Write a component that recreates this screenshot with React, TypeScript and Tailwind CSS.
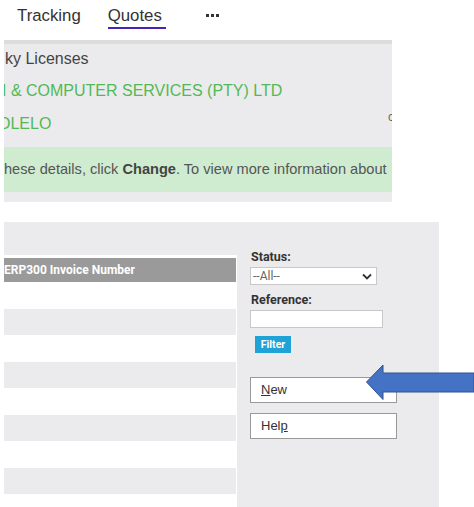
import React from "react";

const rows = [0, 1, 2, 3, 4, 5, 6, 7, 8];

export default function App() {
  return (
    <div className="relative w-[474px] h-[507px] overflow-hidden bg-white font-['Liberation_Sans',Arial,sans-serif]">
      {/* Nav */}
      <div className="h-[40px] flex items-start pt-[6px] text-[16.8px] leading-[20px] text-[#333]">
        <div className="ml-[17px]">Tracking</div>
        <div className="ml-[27px] flex flex-col">
          <span>Quotes</span>
          <span className="mt-[1px] h-[2px] w-[58px] bg-[#4b22b8]" />
        </div>
        <div className="ml-[40px] mt-[8px] flex gap-[2px]">
          <span className="w-[3px] h-[3px] bg-[#333]" />
          <span className="w-[3px] h-[3px] bg-[#333]" />
          <span className="w-[3px] h-[3px] bg-[#333]" />
        </div>
      </div>

      {/* Details panel */}
      <div className="relative ml-[4px] w-[388px] h-[162px] border-t-4 border-[#dcdcdc] bg-[#ebebed] overflow-hidden">
        <div className="flex flex-col gap-[12.5px] pt-[4.5px] text-[16px] leading-[20px] whitespace-nowrap">
          <div className="ml-[1px] text-[#444]">ky Licenses</div>
          <div className="ml-[-2px] text-[#52b955]">I &amp; COMPUTER SERVICES (PTY) LTD</div>
          <div className="ml-[-6px] text-[#52b955]">OLELO</div>
        </div>
        <span className="absolute left-[384px] top-[64px] text-[12px] text-[#666]">c</span>
        <div className="mt-[13px] h-[45px] bg-[#cfecd0] flex items-center whitespace-nowrap text-[14.6px] leading-[17px] text-[#555]">
          <span className="ml-[0px] mt-[1px]">
            hese details, click <b className="font-bold text-[#444]">Change</b>. To view more information about
          </span>
        </div>
      </div>

      {/* Bottom section */}
      <div className="mt-[20px] ml-[4px] w-[435px] h-[285px] bg-[#ebebed] flex overflow-hidden">
        <div className="w-[233px] shrink-0 flex flex-col">
          <div className="h-[33px] shrink-0" />
          <div className="flex-1 min-h-0 overflow-hidden bg-white pt-[3px] pr-[1px]">
            <div className="h-[24px] bg-[#9a9a9a] flex items-center text-white font-bold text-[12px] font-['Roboto',Arial,sans-serif] whitespace-nowrap">
              ERP300 Invoice Number
            </div>
            {rows.map((i) => (
              <div
                key={i}
                className={i % 2 === 1 ? "h-[26.5px] bg-[#ebebed]" : "h-[26.5px] bg-white"}
              />
            ))}
          </div>
        </div>
        <div className="flex-1 pl-[13px] pt-[27px] flex flex-col items-start font-['Roboto',Arial,sans-serif]">
          <div className="ml-[1px] text-[12.5px] leading-[15px] font-bold text-[#333]">Status:</div>
          <div className="mt-[3px] w-[127px] h-[18px] bg-white border border-[#c8c8c8] flex items-center justify-between px-[2px]">
            <span className="text-[12px] text-[#666]">--All--</span>
            <svg width="10" height="7" viewBox="0 0 10 7" className="mr-[2px]">
              <path d="M1 1.5 L5 5.5 L9 1.5" fill="none" stroke="#333" strokeWidth="1.8" />
            </svg>
          </div>
          <div className="mt-[7px] ml-[1px] text-[12.5px] leading-[15px] font-bold text-[#333]">Reference:</div>
          <div className="mt-[3px] w-[133px] h-[18px] bg-white border border-[#c8c8c8]" />
          <div className="mt-[8px] ml-[5px] w-[36px] h-[17px] bg-[#1fa2d6] flex items-center justify-center text-white text-[10.5px] font-bold">
            Filter
          </div>
          <div className="mt-[24px] w-[147px] h-[26px] bg-white border border-[#999] flex items-center pl-[10px] text-[13px] text-[#333] font-['Liberation_Sans',Arial,sans-serif]">
            <span><span className="underline">N</span>ew</span>
          </div>
          <div className="mt-[10px] w-[147px] h-[26px] bg-white border border-[#999] flex items-center pl-[10px] text-[13px] text-[#333] font-['Liberation_Sans',Arial,sans-serif]">
            <span>Hel<span className="underline">p</span></span>
          </div>
        </div>
      </div>

      {/* Blue arrow annotation */}
      <svg className="absolute left-[366px] top-[364px]" width="108" height="37" viewBox="0 0 108 37">
        <polygon
          points="0.5,18 17,1 17,9 108,9 108,28 17,28 17,35.5"
          fill="#4472c4"
          stroke="#2f528f"
          strokeWidth="1"
        />
      </svg>
    </div>
  );
}
